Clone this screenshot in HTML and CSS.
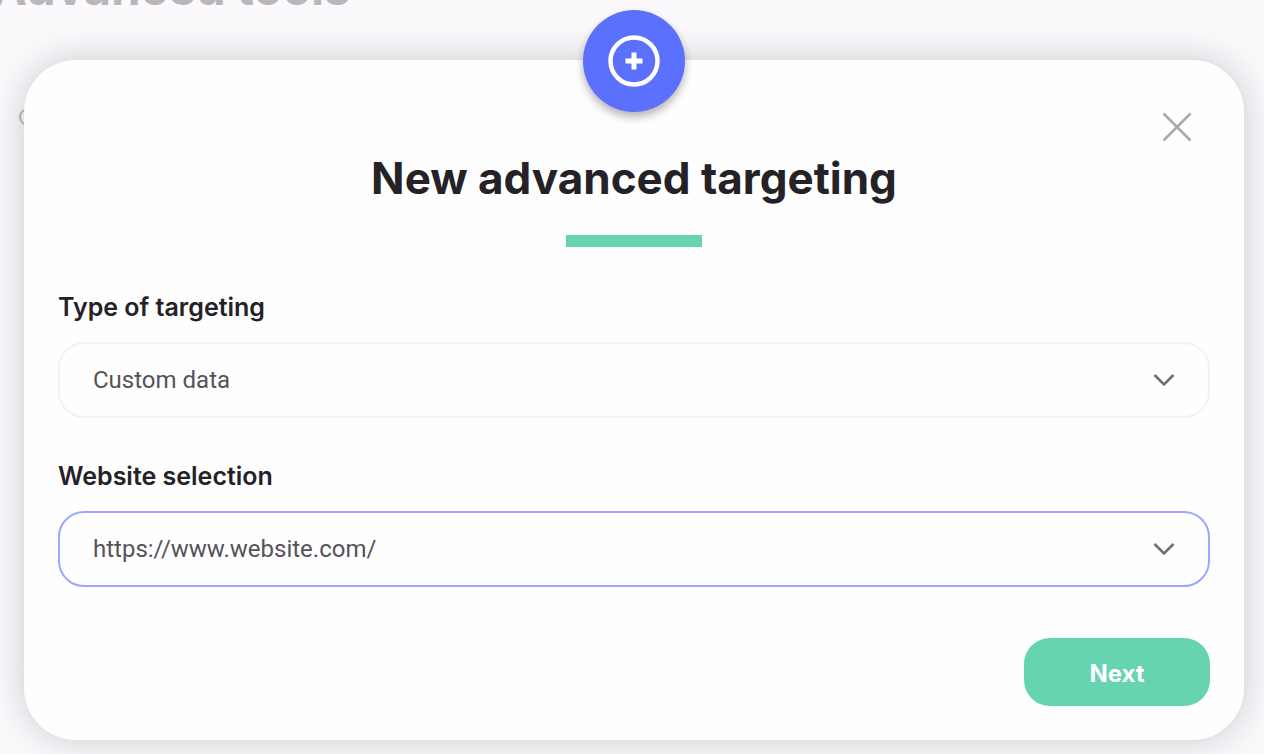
FILE: index.html
```html
<!DOCTYPE html>
<html lang="en">
<head>
<meta charset="utf-8">
<meta name="viewport" content="width=device-width, initial-scale=1">
<title>New advanced targeting</title>
<link rel="stylesheet" href="styles.css">
</head>
<body>
<div class="backdrop" aria-hidden="true">
  <p class="backdrop-title">Advanced tools</p>
  <svg class="backdrop-icon" width="18" height="18" viewBox="0 0 18 18"><circle cx="9" cy="9" r="8"/></svg>
</div>
<main class="dialog" role="dialog" aria-labelledby="dialog-title">
  <div class="badge">
    <svg width="52" height="52" viewBox="0 0 52 52" aria-hidden="true">
      <circle cx="26" cy="26" r="23.5" fill="none" stroke="#fff" stroke-width="4.5"/>
      <path d="M26 17.5v17M17.5 26h17" fill="none" stroke="#fff" stroke-width="5"/>
    </svg>
  </div>
  <button class="close" type="button" aria-label="Close">
    <svg width="30" height="30" viewBox="0 0 30 30" aria-hidden="true"><path d="M1.5 1.5l27 27M28.5 1.5l-27 27"/></svg>
  </button>
  <h1 class="title" id="dialog-title">New advanced targeting</h1>
  <div class="rule"></div>
  <form class="form">
    <div class="field">
      <label class="label" for="type">Type of targeting</label>
      <div class="control">
        <select class="select" id="type"><option>Custom data</option></select>
        <svg class="chevron" width="22" height="14" viewBox="0 0 22 14" aria-hidden="true"><path d="M1.5 2l9.5 9.5L20.5 2"/></svg>
      </div>
    </div>
    <div class="field">
      <label class="label" for="site">Website selection</label>
      <div class="control">
        <select class="select select-active" id="site"><option>https://www.website.com/</option></select>
        <svg class="chevron" width="22" height="14" viewBox="0 0 22 14" aria-hidden="true"><path d="M1.5 2l9.5 9.5L20.5 2"/></svg>
      </div>
    </div>
    <button class="next" type="button">Next</button>
  </form>
</main>
</body>
</html>
```
FILE: styles.css
```css
* {
  box-sizing: border-box;
}

body {
  margin: 0;
  padding: 60px 20px 14px 24px;
  background: #fbf9fc;
  color: #242226;
  font-family: Inter, "Open Sans", sans-serif;
}

.backdrop {
  position: absolute;
  inset: 0;
  overflow: hidden;
  color: #b9b7bb;
}

.backdrop-title {
  margin: -40px 0 0 -8px;
  font-size: 47px;
  line-height: 56px;
  font-weight: 700;
}

.backdrop-icon {
  display: block;
  margin: 92px 0 0 19px;
  fill: none;
  stroke: currentColor;
  stroke-width: 2;
}

.dialog {
  position: relative;
  display: flex;
  flex-direction: column;
  align-items: center;
  padding: 92px 34px 34px;
  border-radius: 52px;
  background: #fefefe;
  box-shadow: 0 0 36px rgba(40, 30, 45, 0.22);
}

.badge {
  position: absolute;
  top: -50px;
  left: 50%;
  display: grid;
  place-items: center;
  width: 102px;
  height: 102px;
  margin-left: -51px;
  border-radius: 50%;
  background: #5c70fe;
  box-shadow: 0 5px 9px rgba(30, 20, 30, 0.32);
}

.close {
  position: absolute;
  top: 52px;
  right: 52px;
  padding: 0;
  border: 0;
  background: none;
  line-height: 0;
  cursor: pointer;
}

.close path {
  fill: none;
  stroke: #aaa8ac;
  stroke-width: 2.5;
}

.title {
  margin: 0;
  font-size: 44px;
  line-height: 52px;
  font-weight: 700;
}

.rule {
  width: 136px;
  height: 12px;
  margin-top: 31px;
  background: #66d3b1;
}

.form {
  display: flex;
  flex-direction: column;
  align-self: stretch;
  gap: 41px;
  margin-top: 43px;
}

.field {
  display: flex;
  flex-direction: column;
  gap: 18px;
}

.label {
  font-size: 25px;
  line-height: 34px;
  font-weight: 600;
}

.control {
  display: grid;
  align-items: center;
}

.select,
.chevron {
  grid-area: 1 / 1;
}

.select {
  appearance: none;
  width: 100%;
  height: 76px;
  padding: 0 72px 0 33px;
  border: 2px solid #f4f1f6;
  border-radius: 26px;
  outline: 0;
  background: #fefefe;
  color: #555358;
  font: 24px/32px Roboto, sans-serif;
}

.select-active {
  border-color: #9ca7ff;
}

.chevron {
  justify-self: end;
  margin-right: 35px;
  fill: none;
  stroke: #706e72;
  stroke-width: 2.5;
  pointer-events: none;
}

.next {
  align-self: flex-end;
  width: 186px;
  height: 68px;
  margin-top: 10px;
  padding: 4px 0 0;
  border: 0;
  border-radius: 26px;
  background: #66d3b1;
  color: #fff;
  font: 700 24px/32px Inter, "Open Sans", sans-serif;
  cursor: pointer;
}
```
